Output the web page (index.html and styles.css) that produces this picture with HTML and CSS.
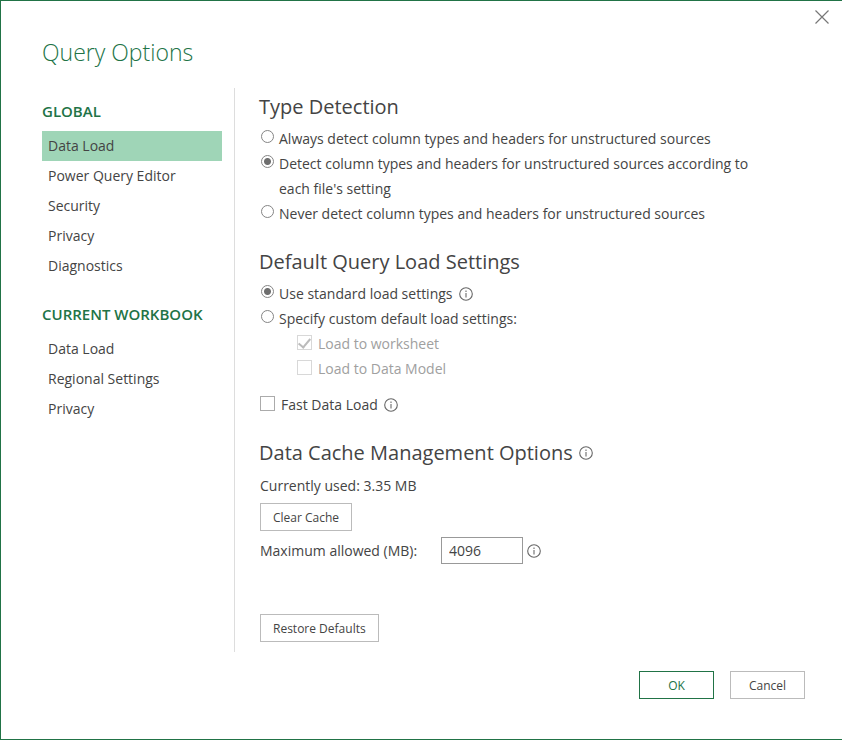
FILE: index.html
```
<!DOCTYPE html>
<html lang="en">
<head>
<meta charset="utf-8">
<title>Query Options</title>
<link rel="stylesheet" href="styles.css">
</head>
<body>
<svg class="defs" aria-hidden="true">
  <symbol id="info" viewBox="0 0 14 14">
    <circle cx="7" cy="7" r="6.3" fill="none" stroke="#666" stroke-width="1.1"/>
    <path d="M7 6v4.4M7 3.6v1.3" fill="none" stroke="#777" stroke-width="1.2"/>
  </symbol>
</svg>
<main class="dialog">
  <div class="titlebar">
    <button class="close" type="button" aria-label="Close">
      <svg viewBox="0 0 14 14" width="14" height="14"><path d="M.5 .5l13 13M13.5 .5l-13 13" fill="none" stroke="#777" stroke-width="1.2"/></svg>
    </button>
  </div>
  <h1 class="title">Query Options</h1>
  <div class="body">
    <nav class="sidebar">
      <h2 class="group">GLOBAL</h2>
      <ul class="links">
        <li><a class="link selected" href="#" aria-current="page">Data Load</a></li>
        <li><a class="link" href="#">Power Query Editor</a></li>
        <li><a class="link" href="#">Security</a></li>
        <li><a class="link" href="#">Privacy</a></li>
        <li><a class="link" href="#">Diagnostics</a></li>
      </ul>
      <h2 class="group">CURRENT WORKBOOK</h2>
      <ul class="links">
        <li><a class="link" href="#">Data Load</a></li>
        <li><a class="link" href="#">Regional Settings</a></li>
        <li><a class="link" href="#">Privacy</a></li>
      </ul>
    </nav>
    <form class="content" id="options">
      <section class="section">
        <h2 class="heading">Type Detection</h2>
        <label class="option"><input class="radio" type="radio" name="detect"><span>Always detect column types and headers for unstructured sources</span></label>
        <label class="option"><input class="radio" type="radio" name="detect" checked><span>Detect column types and headers for unstructured sources according to each file's setting</span></label>
        <label class="option"><input class="radio" type="radio" name="detect"><span>Never detect column types and headers for unstructured sources</span></label>
      </section>
      <section class="section">
        <h2 class="heading">Default Query Load Settings</h2>
        <div class="row"><label class="option"><input class="radio" type="radio" name="load" checked><span>Use standard load settings</span></label><svg class="info"><use href="#info"/></svg></div>
        <label class="option"><input class="radio" type="radio" name="load"><span>Specify custom default load settings:</span></label>
        <div class="nested">
          <label class="option disabled"><input class="check" type="checkbox" checked disabled><span>Load to worksheet</span></label>
          <label class="option disabled"><input class="check" type="checkbox" disabled><span>Load to Data Model</span></label>
        </div>
        <div class="row fast"><label class="option"><input class="check" type="checkbox"><span>Fast Data Load</span></label><svg class="info"><use href="#info"/></svg></div>
      </section>
      <section class="section">
        <div class="row"><h2 class="heading">Data Cache Management Options</h2><svg class="info"><use href="#info"/></svg></div>
        <p class="text">Currently used: 3.35 MB</p>
        <button class="button" type="button">Clear Cache</button>
        <div class="row limit"><label class="limit-label" for="max">Maximum allowed (MB):</label><input class="field" id="max" type="text" value="4096"><svg class="info"><use href="#info"/></svg></div>
      </section>
      <button class="button restore" type="reset">Restore Defaults</button>
    </form>
  </div>
  <footer class="footer">
    <button class="button action primary" type="submit" form="options">OK</button>
    <button class="button action" type="button">Cancel</button>
  </footer>
</main>
</body>
</html>
```
FILE: styles.css
```
* { box-sizing: border-box; }

body {
  margin: 0;
  background: #fff;
  color: #444;
  font: 14px/25px "Open Sans", "Noto Sans", sans-serif;
}

h1, h2, p, ul { margin: 0; padding: 0; font-weight: 400; }
ul { list-style: none; }
button, input { font: inherit; color: inherit; margin: 0; }

.defs { position: absolute; width: 0; height: 0; }

.dialog {
  min-height: 100vh;
  border: 1px solid #217346;
  border-right: 0;
  display: flex;
  flex-direction: column;
}

.titlebar { display: flex; justify-content: flex-end; padding: 4px 8px 0; }
.close {
  display: grid;
  place-items: center;
  width: 24px;
  height: 24px;
  padding: 0;
  border: 0;
  background: none;
}

.title {
  padding: 5px 41px 0;
  color: #217346;
  font-size: 23px;
  font-weight: 300;
  line-height: 36px;
}

.body { display: flex; padding: 18px 41px 0; }

.sidebar {
  flex: 0 0 193px;
  padding: 8px 12px 0 0;
  border-right: 1px solid #ddd;
}
.group {
  color: #217346;
  font-size: 15px;
  font-weight: 600;
  line-height: 30px;
}
.links { padding: 5px 0 18px; }
.link {
  display: block;
  padding: 0 6px;
  line-height: 30px;
  color: inherit;
  text-decoration: none;
}
.selected { background: #9fd5b7; }

.content { flex: 1; padding: 0 40px 10px 24px; }
.section { padding-bottom: 17px; }
.heading { font-size: 20px; line-height: 38px; }

.row { display: flex; align-items: center; gap: 6px; }
.info { flex: none; width: 14px; height: 14px; }

.option { display: flex; align-items: flex-start; gap: 5px; }

.radio {
  appearance: none;
  flex: none;
  width: 13px;
  height: 13px;
  margin: 4px 0 0 2px;
  border: 1px solid #858585;
  border-radius: 50%;
}
.radio:checked { background: radial-gradient(circle, #6e6e6e 3px, #fff 4px); }

.check {
  appearance: none;
  flex: none;
  width: 15px;
  height: 15px;
  margin: 4px 1px 0;
  border: 1px solid #ababab;
  display: grid;
  place-items: center;
}
.check:checked::after {
  content: "";
  width: 5px;
  height: 10px;
  margin-bottom: 3px;
  border: solid #bbb;
  border-width: 0 2px 2px 0;
  transform: rotate(40deg);
}
.disabled { color: #a0a0a0; }
.disabled .check { border-color: #d8d8d8; }
.nested { padding-left: 37px; }
.fast { padding-top: 11px; }

.button {
  height: 28px;
  padding: 1px 11px 0;
  border: 1px solid #bbb;
  background: #fff;
  font-size: 12px;
  line-height: 25px;
  display: block;
  min-width: 75px;
  margin-left: 1px;
}
.button:not(.action) { padding: 1px 12px 0; }
.text { padding: 1px 1px 5px; }
.limit { padding: 6px 0 0 1px; gap: 4px; }
.limit-label { width: 177px; }
.field {
  width: 82px;
  height: 27px;
  padding: 0 7px;
  border: 1px solid #999;
  background: #fff;
}
.restore { margin-top: 33px; }

.footer { display: flex; justify-content: flex-end; gap: 16px; padding: 19px 37px 36px; }
.action { margin: 0; }
.primary { border-color: #217346; color: #217346; }
```
